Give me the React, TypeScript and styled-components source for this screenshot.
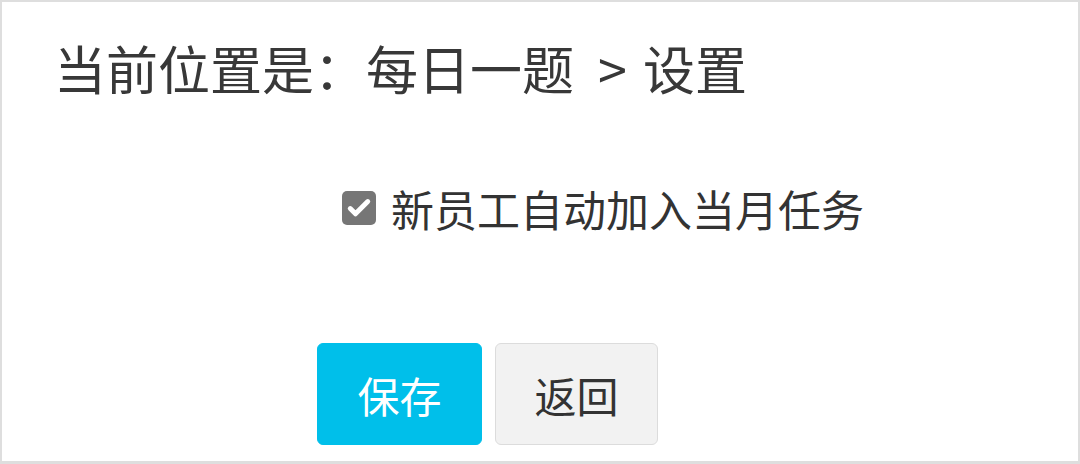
import React, { useState } from "react";
import styled, { createGlobalStyle } from "styled-components";

const GlobalStyle = createGlobalStyle`
  html, body {
    margin: 0;
    padding: 0;
    background: #fff;
  }
  body {
    font-family: "Noto Sans CJK SC", "Noto Sans", sans-serif;
  }
`;

const Frame = styled.div`
  width: 1080px;
  height: 464px;
  box-sizing: border-box;
  border: 2px solid #dedede;
  border-bottom-width: 3px;
  background: #fff;
  color: #333;
  padding-top: 36px;
`;

const Breadcrumb = styled.h1`
  margin: 0;
  padding-left: 52px;
  font-size: 52px;
  font-weight: 400;
  line-height: 60px;
  color: #383838;
  white-space: nowrap;
`;

const Sep = styled.span`
  margin: 0 16px 0 24px;
`;

const Form = styled.form`
  display: flex;
  flex-direction: column;
  margin-top: 82px;
`;

const CheckRow = styled.label`
  display: flex;
  align-items: center;
  gap: 15px;
  padding-left: 340px;
  height: 56px;
  font-size: 43px;
  color: #333;
  cursor: pointer;
`;

const Box = styled.span<{ $checked: boolean }>`
  width: 34px;
  height: 34px;
  border-radius: 5px;
  background: ${(p) => (p.$checked ? "#767676" : "#fff")};
  border: ${(p) => (p.$checked ? "none" : "2px solid #767676")};
  box-sizing: border-box;
  display: flex;
  align-items: center;
  justify-content: center;
  flex-shrink: 0;
`;

const Actions = styled.div`
  display: flex;
  gap: 13px;
  padding-left: 315px;
  margin-top: 107px;
`;

const Button = styled.button<{ $primary?: boolean }>`
  width: 165px;
  height: 102px;
  box-sizing: border-box;
  border-radius: 6px;
  border: 1px solid ${(p) => (p.$primary ? "#00bfea" : "#dcdcdc")};
  background: ${(p) => (p.$primary ? "#00bfea" : "#f2f2f2")};
  color: ${(p) => (p.$primary ? "#fff" : "#333")};
  font-family: "Noto Sans CJK SC", "Noto Sans", sans-serif;
  font-size: 42px;
  padding: 0;
  display: flex;
  align-items: center;
  justify-content: center;
  cursor: pointer;
`;

export default function App() {
  const [checked, setChecked] = useState(true);

  return (
    <>
      <GlobalStyle />
      <Frame>
        <Breadcrumb>
          当前位置是：每日一题<Sep>&gt;</Sep>设置
        </Breadcrumb>
        <Form onSubmit={(e) => e.preventDefault()}>
          <CheckRow onClick={() => setChecked(!checked)}>
            <Box $checked={checked}>
              {checked && (
                <svg width="28" height="28" viewBox="0 0 24 24">
                  <path
                    d="M4.5 12.5l4.5 4.5L19.5 6.5"
                    fill="none"
                    stroke="#fff"
                    strokeWidth="4.2"
                    strokeLinecap="round"
                    strokeLinejoin="round"
                  />
                </svg>
              )}
            </Box>
            新员工自动加入当月任务
          </CheckRow>
          <Actions>
            <Button type="submit" $primary>
              保存
            </Button>
            <Button type="button" style={{ width: 163 }}>
              返回
            </Button>
          </Actions>
        </Form>
      </Frame>
    </>
  );
}
